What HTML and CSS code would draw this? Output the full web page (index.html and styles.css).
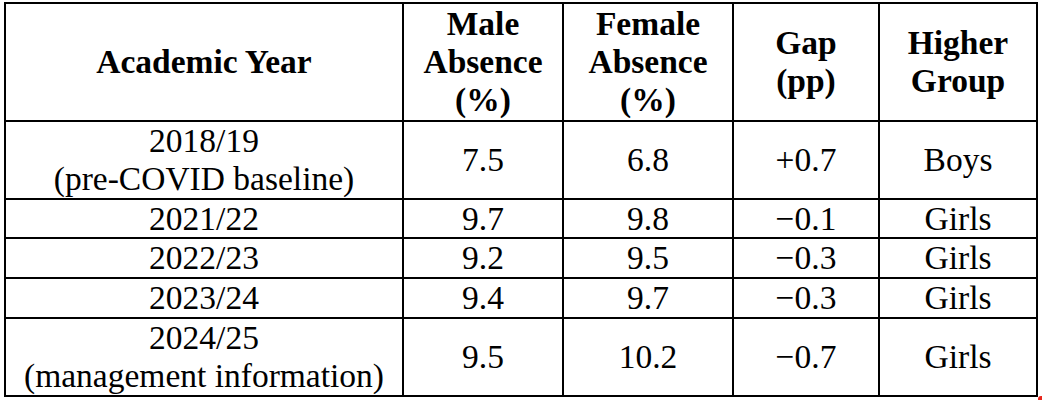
FILE: index.html
```html
<!DOCTYPE html>
<html lang="en">
<head>
<meta charset="utf-8">
<title>Absence by gender</title>
<link rel="stylesheet" href="styles.css">
</head>
<body>
<table class="absence">
  <colgroup>
    <col class="c-year">
    <col class="c-male">
    <col class="c-female">
    <col class="c-gap">
    <col class="c-group">
  </colgroup>
  <thead>
    <tr>
      <th>Academic Year</th>
      <th>Male<br>Absence<br>(%)</th>
      <th>Female<br>Absence<br>(%)</th>
      <th>Gap<br>(pp)</th>
      <th>Higher<br>Group</th>
    </tr>
  </thead>
  <tbody>
    <tr>
      <td>2018/19<br>(pre-COVID baseline)</td>
      <td>7.5</td>
      <td>6.8</td>
      <td>+0.7</td>
      <td>Boys</td>
    </tr>
    <tr class="short">
      <td>2021/22</td>
      <td>9.7</td>
      <td>9.8</td>
      <td>&minus;0.1</td>
      <td>Girls</td>
    </tr>
    <tr>
      <td>2022/23</td>
      <td>9.2</td>
      <td>9.5</td>
      <td>&minus;0.3</td>
      <td>Girls</td>
    </tr>
    <tr>
      <td>2023/24</td>
      <td>9.4</td>
      <td>9.7</td>
      <td>&minus;0.3</td>
      <td>Girls</td>
    </tr>
    <tr>
      <td>2024/25<br>(management information)</td>
      <td>9.5</td>
      <td>10.2</td>
      <td>&minus;0.7</td>
      <td>Girls</td>
    </tr>
  </tbody>
</table>
<span class="corner-mark"></span>
</body>
</html>
```

FILE: styles.css
```css
html, body {
  margin: 0;
  padding: 0;
  background: #ffffff;
}

body {
  position: relative;
  width: 1043px;
  height: 401px;
  overflow: hidden;
  font-family: "Liberation Serif", Tinos, "Times New Roman", Times, "Nimbus Roman", "DejaVu Serif", serif;
  color: #000000;
}

.absence {
  margin: 2px 0 0 4px;
  width: 1034px;
  table-layout: fixed;
  border-collapse: separate;
  border-spacing: 0;
  border-top: 2px solid #000;
  border-left: 2px solid #000;
  font-family: "Liberation Serif", Tinos, "Times New Roman", Times, "Nimbus Roman", "DejaVu Serif", serif;
  font-size: 33.5px;
  line-height: 38px;
}

.c-year { width: 398px; }
.c-male { width: 160px; }
.c-female { width: 170px; }
.c-gap { width: 146px; }
.c-group { width: 158px; }

.absence th,
.absence td {
  border-right: 2px solid #000;
  border-bottom: 2px solid #000;
  padding: 0;
  text-align: center;
  vertical-align: middle;
  white-space: nowrap;
  font-family: "Liberation Serif", Tinos, "Times New Roman", Times, "Nimbus Roman", "DejaVu Serif", serif;
}

.absence th {
  font-weight: bold;
  height: 116px;
  padding: 1px 0;
  box-sizing: border-box;
}

.absence .short td {
  line-height: 37px;
}

.corner-mark {
  position: absolute;
  right: 1px;
  bottom: 1px;
  width: 4px;
  height: 4px;
  background: #e8261c;
  border-radius: 3px 0 0 0;
}
```
